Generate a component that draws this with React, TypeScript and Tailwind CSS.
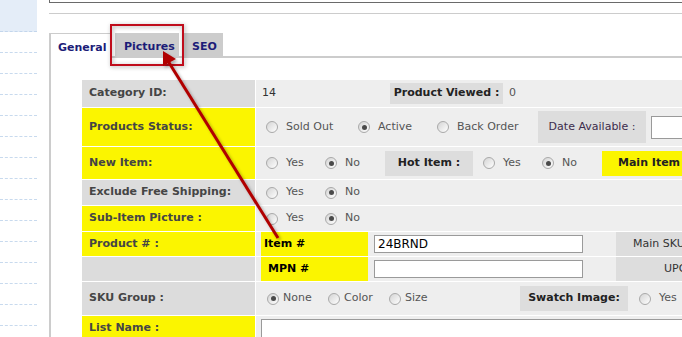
import React from "react";

type RadioProps = {
  label: string;
  checked?: boolean;
  width?: string;
  gap?: string;
};

function Radio({ label, checked = false, width = "", gap = "gap-[8px]" }: RadioProps) {
  return (
    <div className={`flex items-center shrink-0 ${gap} ${width}`}>
      <span className="w-[12px] h-[12px] rounded-full border border-[#a9a9a9] bg-gradient-to-br from-[#d4d4d4] to-white flex items-center justify-center shrink-0">
        {checked && <span className="w-[5px] h-[5px] rounded-full bg-[#4a4a4a]" />}
      </span>
      <span className="text-[#555] whitespace-nowrap">{label}</span>
    </div>
  );
}

function Row({
  label,
  yellow = false,
  h,
  children,
}: {
  label: string;
  yellow?: boolean;
  h: string;
  children?: React.ReactNode;
}) {
  return (
    <div className={`flex gap-px ${h}`}>
      <div
        className={`w-[173px] shrink-0 pl-[7px] flex items-center font-bold text-[#454545] whitespace-nowrap ${
          yellow ? "bg-[#fbf500]" : "bg-[#dcdcdc]"
        }`}
      >
        {label}
      </div>
      <div className="flex-1 bg-[#eeeeee] flex items-center min-w-0">{children}</div>
    </div>
  );
}

export default function App() {
  const sideRows = Array.from({ length: 15 });

  return (
    <div className="relative w-[682px] h-[337px] overflow-hidden bg-white flex font-['DejaVu_Sans',sans-serif] text-[11px]">
      {/* ================= SIDEBAR ================= */}
      <div className="w-[37px] shrink-0 flex flex-col">
        <div className="h-[32px] shrink-0 bg-[#e4edf8] border-b border-dashed border-[#c3d6ec]" />
        {sideRows.map((_, i) => (
          <div key={i} className="h-[21px] shrink-0 border-b border-dashed border-[#c8daee]" />
        ))}
      </div>

      {/* ================= MAIN ================= */}
      <div className="ml-[12px] flex-1 min-w-0 flex flex-col">
        <div className="h-[3px] shrink-0 border-l border-b border-[#6a6a6a]" />
        <div className="mt-[10px] h-px shrink-0 bg-[#cccccc]" />

        {/* tabs */}
        <div className="mt-[19px] h-[25px] shrink-0 flex items-stretch font-bold text-[#1c1c78]">
          <div className="w-[61px] shrink-0 bg-white border-t border-l-2 border-[#cccccc] pl-[7px] pt-[6px]">
            General
          </div>
          <div className="w-[5px] shrink-0 border-b-2 border-[#cccccc]" />
          <div className="w-[64px] shrink-0 bg-[#cccccc] pl-[9px] pt-[6px]">Pictures</div>
          <div className="w-[4px] shrink-0 border-b-2 border-[#cccccc]" />
          <div className="w-[40px] shrink-0 bg-[#cccccc] pl-[9px] pt-[6px]">SEO</div>
          <div className="flex-1 border-b-2 border-[#cccccc]" />
        </div>

        {/* panel */}
        <div className="flex-1 border-l-2 border-[#cccccc] pl-[31px] pt-[22px]">
          <div className="w-[720px] flex flex-col gap-px">
            <Row label="Category ID:" h="h-[27px]">
              <span className="pl-[6px] w-[134px] shrink-0 text-[#333]">14</span>
              <div className="w-[113px] h-[21px] shrink-0 bg-[#dddddd] font-bold text-[#222] flex items-center justify-center">
                Product Viewed :
              </div>
              <span className="ml-[6px] text-[#555]">0</span>
            </Row>

            <Row label="Products Status:" yellow h="h-[38px]">
              <div className="pl-[10px] flex items-center">
                <Radio label="Sold Out" width="w-[92px]" />
                <Radio label="Active" checked width="w-[79px]" />
                <Radio label="Back Order" width="w-[101px]" />
                <div className="w-[108px] h-[32px] shrink-0 bg-[#dddddd] text-[#3c2c4c] flex items-center justify-center">
                  Date Available :
                </div>
                <div className="ml-[5px] w-[60px] h-[23px] shrink-0 border border-[#9a9a9a] bg-white" />
              </div>
            </Row>

            <Row label="New Item:" yellow h="h-[32px]">
              <div className="pl-[10px] flex items-center">
                <Radio label="Yes" width="w-[59px]" />
                <Radio label="No" checked width="w-[60px]" />
                <div className="w-[88px] h-[25px] shrink-0 bg-[#dddddd] font-bold text-[#222] flex items-center justify-center">
                  Hot Item :
                </div>
                <div className="ml-[10px] flex items-center">
                  <Radio label="Yes" width="w-[59px]" />
                  <Radio label="No" checked width="w-[60px]" />
                </div>
                <div className="w-[120px] h-[25px] shrink-0 bg-[#fbf500] font-bold text-[#222] pl-[16px] flex items-center">
                  Main Item
                </div>
              </div>
            </Row>

            <Row label="Exclude Free Shipping:" h="h-[25px]">
              <div className="pl-[10px] flex items-center">
                <Radio label="Yes" width="w-[59px]" />
                <Radio label="No" checked width="w-[60px]" />
              </div>
            </Row>

            <Row label="Sub-Item Picture :" yellow h="h-[25px]">
              <div className="pl-[10px] flex items-center">
                <Radio label="Yes" width="w-[59px]" />
                <Radio label="No" checked width="w-[60px]" />
              </div>
            </Row>

            <Row label="Product # :" yellow h="h-[24px]">
              <div className="pl-[5px] flex items-center h-full">
                <div className="w-[107px] h-full shrink-0 bg-[#fbf500] font-bold text-black pl-[3px] flex items-center">
                  Item #
                </div>
                <div className="ml-[6px] w-[209px] h-[18px] shrink-0 border border-[#9a9a9a] bg-white pl-[3px] text-[12px] text-black flex items-center">
                  24BRND
                </div>
                <div className="ml-[33px] w-[120px] h-full shrink-0 bg-[#dddddd] text-[#333] pl-[17px] flex items-center">
                  Main SKU
                </div>
              </div>
            </Row>

            <Row label="" h="h-[24px]">
              <div className="pl-[5px] flex items-center h-full">
                <div className="w-[107px] h-full shrink-0 bg-[#fbf500] font-bold text-black pl-[7px] flex items-center">
                  MPN #
                </div>
                <div className="ml-[6px] w-[209px] h-[18px] shrink-0 border border-[#9a9a9a] bg-white" />
                <div className="ml-[33px] w-[120px] h-full shrink-0 bg-[#dddddd] text-[#333] pl-[48px] flex items-center">
                  UPC
                </div>
              </div>
            </Row>

            <Row label="SKU Group :" h="h-[33px]">
              <div className="pl-[11px] flex items-center">
                <Radio label="None" checked width="w-[61px]" gap="gap-[4px]" />
                <Radio label="Color" width="w-[61px]" gap="gap-[4px]" />
                <Radio label="Size" width="w-[131px]" gap="gap-[4px]" />
                <div className="w-[108px] h-[25px] shrink-0 bg-[#dddddd] font-bold text-[#222] flex items-center justify-center">
                  Swatch Image:
                </div>
                <div className="ml-[11px]">
                  <Radio label="Yes" />
                </div>
              </div>
            </Row>

            <Row label="List Name :" yellow h="h-[24px]">
              <div className="pl-[5px] pt-[3px] self-start w-full">
                <div className="w-[440px] h-[20px] border border-[#9a9a9a] bg-white" />
              </div>
            </Row>
          </div>
        </div>
      </div>

      {/* ================= ANNOTATION ================= */}
      <svg
        className="absolute inset-0 pointer-events-none"
        width="682"
        height="337"
        viewBox="0 0 682 337"
      >
        <defs>
          <filter id="boxShadow" x="-20%" y="-20%" width="140%" height="140%">
            <feDropShadow dx="1" dy="1" stdDeviation="2" floodColor="#000" floodOpacity="0.35" />
          </filter>
          <filter id="arrowShadow" x="-20%" y="-20%" width="140%" height="140%">
            <feDropShadow dx="2" dy="2" stdDeviation="1.5" floodColor="#000" floodOpacity="0.3" />
          </filter>
        </defs>
        <rect x="111" y="25" width="72" height="40" fill="none" stroke="#c0101a" strokeWidth="2" filter="url(#boxShadow)" />
        <g filter="url(#arrowShadow)">
          <line x1="278" y1="238" x2="168" y2="61" stroke="#b00000" strokeWidth="3" />
          <polygon points="163,51 176,59 163,66" fill="#b00000" />
        </g>
      </svg>
    </div>
  );
}
